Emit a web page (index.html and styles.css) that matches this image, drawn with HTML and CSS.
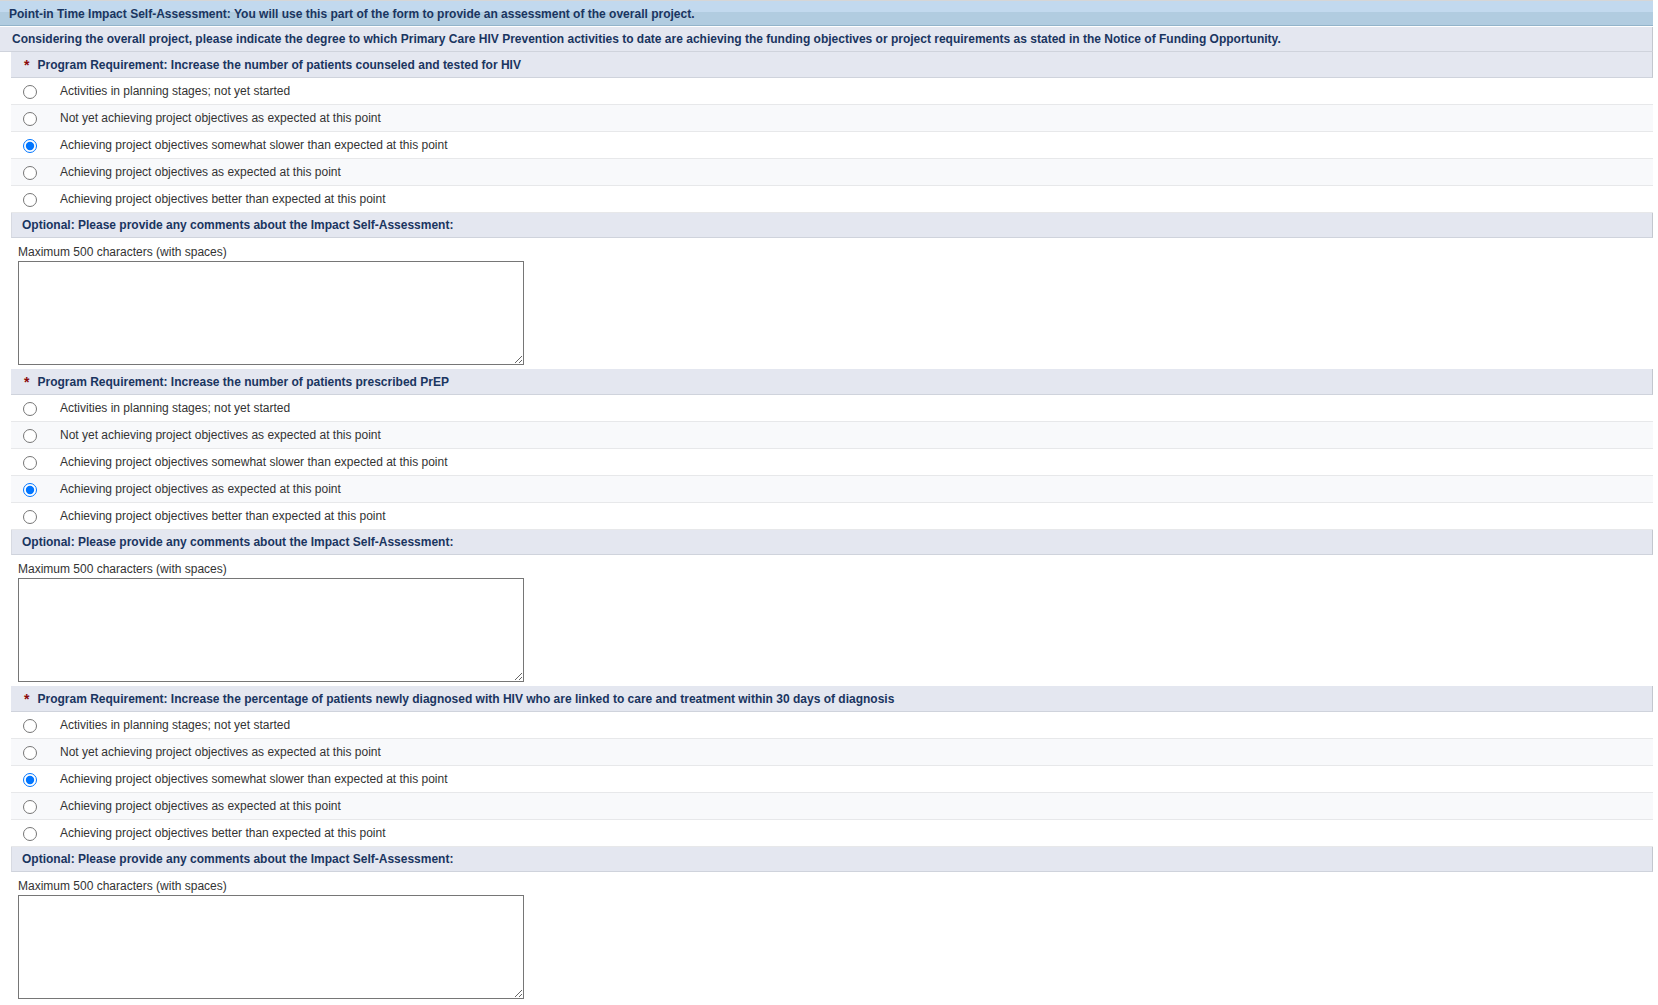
FILE: index.html
```html
<!DOCTYPE html>
<html lang="en">
<head>
<meta charset="utf-8">
<title>Point-in Time Impact Self-Assessment</title>
<link rel="stylesheet" href="styles.css">
</head>
<body>
<div class="form">
  <div class="title">Point-in Time Impact Self-Assessment: You will use this part of the form to provide an assessment of the overall project.</div>
  <div class="intro">Considering the overall project, please indicate the degree to which Primary Care HIV Prevention activities to date are achieving the funding objectives or project requirements as stated in the Notice of Funding Opportunity.</div>

  <div class="section">
    <div class="req"><span class="star">*</span>Program Requirement: Increase the number of patients counseled and tested for HIV</div>
    <div class="options">
      <label class="opt"><input type="radio" name="q1"><span>Activities in planning stages; not yet started</span></label>
      <label class="opt alt"><input type="radio" name="q1"><span>Not yet achieving project objectives as expected at this point</span></label>
      <label class="opt"><input type="radio" name="q1" checked><span>Achieving project objectives somewhat slower than expected at this point</span></label>
      <label class="opt alt"><input type="radio" name="q1"><span>Achieving project objectives as expected at this point</span></label>
      <label class="opt"><input type="radio" name="q1"><span>Achieving project objectives better than expected at this point</span></label>
    </div>
    <div class="opt-head">Optional: Please provide any comments about the Impact Self-Assessment:</div>
    <div class="comment">
      <div class="hint">Maximum 500 characters (with spaces)</div>
      <textarea class="box" maxlength="500"></textarea>
    </div>
  </div>

  <div class="section">
    <div class="req"><span class="star">*</span>Program Requirement: Increase the number of patients prescribed PrEP</div>
    <div class="options">
      <label class="opt"><input type="radio" name="q2"><span>Activities in planning stages; not yet started</span></label>
      <label class="opt alt"><input type="radio" name="q2"><span>Not yet achieving project objectives as expected at this point</span></label>
      <label class="opt"><input type="radio" name="q2"><span>Achieving project objectives somewhat slower than expected at this point</span></label>
      <label class="opt alt"><input type="radio" name="q2" checked><span>Achieving project objectives as expected at this point</span></label>
      <label class="opt"><input type="radio" name="q2"><span>Achieving project objectives better than expected at this point</span></label>
    </div>
    <div class="opt-head">Optional: Please provide any comments about the Impact Self-Assessment:</div>
    <div class="comment">
      <div class="hint">Maximum 500 characters (with spaces)</div>
      <textarea class="box" maxlength="500"></textarea>
    </div>
  </div>

  <div class="section">
    <div class="req"><span class="star">*</span>Program Requirement: Increase the percentage of patients newly diagnosed with HIV who are linked to care and treatment within 30 days of diagnosis</div>
    <div class="options">
      <label class="opt"><input type="radio" name="q3"><span>Activities in planning stages; not yet started</span></label>
      <label class="opt alt"><input type="radio" name="q3"><span>Not yet achieving project objectives as expected at this point</span></label>
      <label class="opt"><input type="radio" name="q3" checked><span>Achieving project objectives somewhat slower than expected at this point</span></label>
      <label class="opt alt"><input type="radio" name="q3"><span>Achieving project objectives as expected at this point</span></label>
      <label class="opt"><input type="radio" name="q3"><span>Achieving project objectives better than expected at this point</span></label>
    </div>
    <div class="opt-head">Optional: Please provide any comments about the Impact Self-Assessment:</div>
    <div class="comment">
      <div class="hint">Maximum 500 characters (with spaces)</div>
      <textarea class="box" maxlength="500"></textarea>
    </div>
  </div>
</div>
</body>
</html>
```

FILE: styles.css
```css
html, body {
  margin: 0;
  padding: 0;
  background: #ffffff;
}

body {
  font-family: "Liberation Sans", Arial, sans-serif;
  font-size: 12px;
  color: #333333;
}

.form {
  width: 1653px;
}

.title {
  height: 26px;
  box-sizing: border-box;
  border-top: 1px solid #d6d6d6;
  border-bottom: 1px solid #93b4ca;
  background: linear-gradient(to bottom, #c2d9ee 0, #c2d9ee 11px, #b1cce0 11px, #b1cce0 100%);
  padding: 6px 0 0 9px;
  font-weight: bold;
  color: #1a3560;
  line-height: 14px;
  white-space: nowrap;
}

.intro {
  height: 25px;
  box-sizing: border-box;
  margin-top: 1px;
  background: #e4e7f0;
  border-right: 1px solid #c3c7cf;
  border-bottom: 1px solid #cfd3dc;
  padding: 5px 0 0 12px;
  font-weight: bold;
  color: #1a3560;
  line-height: 14px;
  white-space: nowrap;
}

.section {
  margin-left: 11px;
  padding-bottom: 4px;
}

.req {
  height: 26px;
  box-sizing: border-box;
  background: #e4e7f0;
  border-right: 1px solid #c3c7cf;
  border-bottom: 1px solid #cfd3dc;
  padding: 6px 0 0 13px;
  font-weight: bold;
  color: #1a3560;
  line-height: 14px;
  white-space: nowrap;
}

.star {
  display: inline-block;
  color: #8b0a0a;
  font-size: 14px;
  line-height: 14px;
  vertical-align: top;
  margin-right: 8px;
}

.options {
  display: flex;
  flex-direction: column;
}

.opt {
  height: 27px;
  box-sizing: border-box;
  display: flex;
  align-items: center;
  border-bottom: 1px solid #e7e8ea;
  padding-left: 12px;
  cursor: pointer;
}

.opt.alt {
  background: #f8f9fb;
}

.opt input {
  margin: 2px 23px 0 0;
  width: 14px;
  height: 14px;
}

.opt span {
  line-height: 14px;
}

.opt-head {
  height: 25px;
  box-sizing: border-box;
  background: #e4e7f0;
  border-right: 1px solid #c3c7cf;
  border-bottom: 1px solid #cfd3dc;
  border-left: 1px solid #d7dae2;
  padding: 5px 0 0 10px;
  font-weight: bold;
  color: #1a3560;
  line-height: 14px;
}

.comment {
  padding: 7px 0 0 7px;
  display: flex;
  flex-direction: column;
  align-items: flex-start;
}

.hint {
  line-height: 14px;
  margin-bottom: 2px;
}

.box {
  width: 506px;
  height: 104px;
  box-sizing: border-box;
  margin: 0;
  border: 1px solid #767676;
  font-family: "Liberation Sans", Arial, sans-serif;
  font-size: 12px;
  resize: both;
}
```
